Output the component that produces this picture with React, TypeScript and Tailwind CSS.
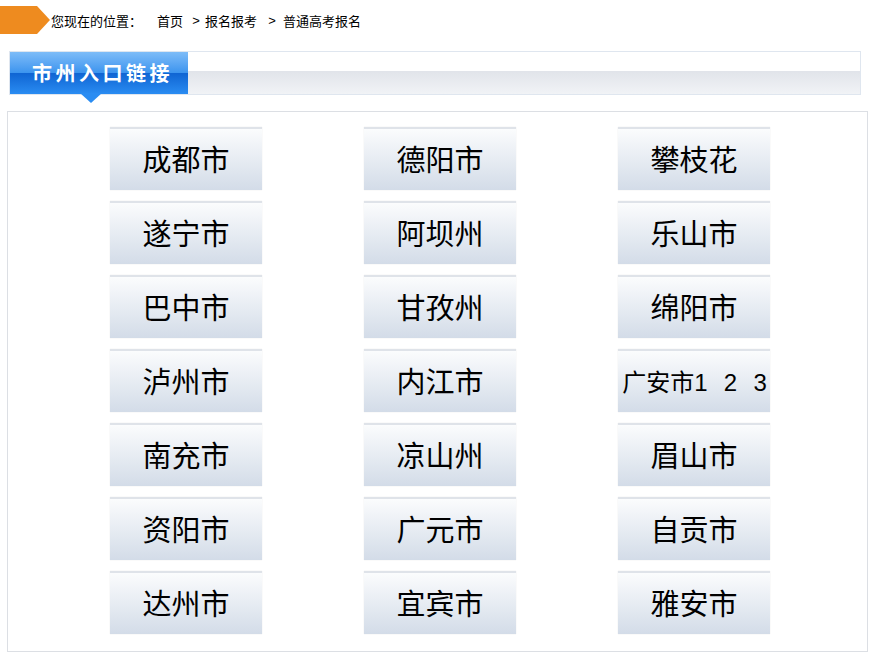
import React from "react";

const cities = [
  "成都市", "德阳市", "攀枝花",
  "遂宁市", "阿坝州", "乐山市",
  "巴中市", "甘孜州", "绵阳市",
  "泸州市", "内江市", "广安市",
  "南充市", "凉山州", "眉山市",
  "资阳市", "广元市", "自贡市",
  "达州市", "宜宾市", "雅安市",
];

const font = { fontFamily: '"Noto Sans CJK SC", "Liberation Sans", sans-serif' };
const btnFont = { fontFamily: '"Liberation Sans", "Noto Sans CJK SC", sans-serif' };

export default function App() {
  return (
    <div className="w-[873px] h-[660px] bg-white relative overflow-hidden" style={font}>
      {/* breadcrumb */}
      <div className="flex items-center h-[28px] mt-[6px]">
        <svg width="51" height="28" viewBox="0 0 51 28" className="shrink-0">
          <polygon points="0,0 37,0 50,14 37,28 0,28" fill="#ee8b1f" />
        </svg>
        <div className="flex items-center text-[13px] leading-none text-black whitespace-nowrap">
          <span>您现在的位置：</span>
          <span className="ml-[15px]">首页</span>
          <span className="ml-[7px] inline-block w-[12px] text-center font-['Liberation_Sans']">&gt;</span>
          <span className="ml-[3px]">报名报考</span>
          <span className="ml-[9px] inline-block w-[12px] text-center font-['Liberation_Sans']">&gt;</span>
          <span className="ml-[5px]">普通高考报名</span>
        </div>
      </div>

      {/* header bar */}
      <div className="ml-[9px] mt-[17px] w-[852px] h-[44px] border border-[#dfe6ef] flex relative">
        <div className="w-[178px] h-full flex flex-col relative">
          <div className="h-1/2 bg-gradient-to-b from-[#7dbcf8] to-[#3b94ee]" />
          <div className="h-1/2 bg-gradient-to-b from-[#0f64d2] to-[#2a8cf2]" />
          <div className="absolute inset-0 flex items-center pl-[22px]">
            <span className="text-white text-[20px] font-bold tracking-[3.5px] leading-none">市州入口链接</span>
          </div>
          <svg className="absolute left-[70px] top-[41px]" width="22" height="10" viewBox="0 0 22 10">
            <polygon points="0,0 22,0 11,10" fill="#2a8cf2" />
          </svg>
        </div>
        <div className="flex-1 flex flex-col">
          <div className="h-[45%] bg-white" />
          <div className="flex-1 bg-gradient-to-b from-[#e1e4ea] to-[#f1f3f6]" />
        </div>
      </div>

      {/* content box */}
      <div className="ml-[7px] mt-[16px] w-[861px] h-[541px] border border-[#dcdfe4] pl-[102px] pt-[15px]">
        <div className="grid grid-cols-[152px_152px_152px] gap-x-[102px] gap-y-[11px]">
          {cities.map((c) => (
            <div
              key={c}
              className="h-[63px] border-t-2 border-[#dfe3e9] bg-gradient-to-b from-[#fbfcfd] to-[#d3dce8] flex items-center justify-center pt-[3px] shadow-[0_0_1px_rgba(0,0,0,0.12)] overflow-visible"
            >
              {c === "广安市" ? (
                <span className="text-[24px] leading-none text-black whitespace-pre pl-[2px]" style={btnFont}>
                  广安市<span className="tracking-[1px]">1  2  3</span>
                </span>
              ) : (
                <span className="text-[29px] leading-none text-black whitespace-pre" style={btnFont}>
                  {c}
                </span>
              )}
            </div>
          ))}
        </div>
      </div>
    </div>
  );
}
